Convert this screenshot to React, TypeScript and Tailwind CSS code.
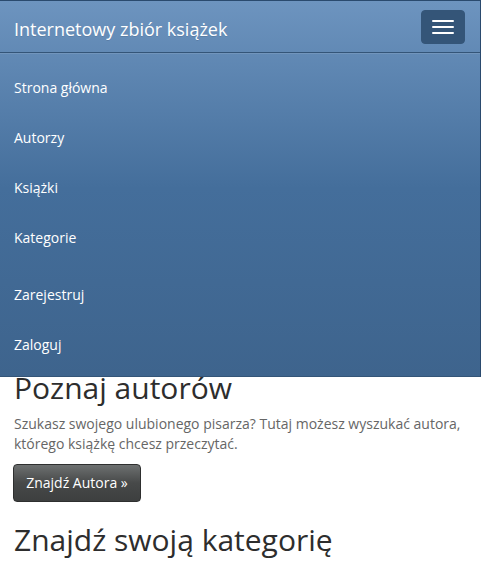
import React from "react";

const links1 = ["Strona główna", "Autorzy", "Książki", "Kategorie"];
const links2 = ["Zarejestruj", "Zaloguj"];

export default function App() {
  return (
    <div className="relative min-h-[562px] bg-white" style={{ fontFamily: '"Open Sans", "Liberation Sans", sans-serif' }}>
      <nav className="absolute left-0 right-0 top-0 z-10 border border-l-0 border-[#2a4a6e] border-b-[#345578] bg-[linear-gradient(#6d94bf,#446e9b_50%,#3e648d)]">
        <div className="flex h-[51px] items-start justify-between">
          <span className="pl-[14px] pt-[18px] text-[18px] leading-[20px] text-white [text-shadow:0_1px_0_rgba(0,0,0,0.1)]">
            Internetowy zbiór książek
          </span>
          <button className="mr-[15px] mt-[9px] flex h-[34px] w-[44px] flex-col items-center justify-center gap-[4px] rounded-[4px] border border-[#345578] bg-[#345578]">
            <span className="block h-[2px] w-[22px] rounded-[1px] bg-white" />
            <span className="block h-[2px] w-[22px] rounded-[1px] bg-white" />
            <span className="block h-[2px] w-[22px] rounded-[1px] bg-white" />
          </button>
        </div>
        <div className="flex flex-col gap-[7.5px] border-t border-[#345578] py-[7.5px] shadow-[inset_0_1px_0_rgba(255,255,255,0.1)]">
          <ul>
            {links1.map((l) => (
              <li key={l} className="flex h-[50px] items-center px-[14px] pt-[4px] text-[14px] leading-[20px] text-white">
                {l}
              </li>
            ))}
          </ul>
          <ul>
            {links2.map((l) => (
              <li key={l} className="flex h-[50px] items-center px-[14px] pt-[4px] text-[14px] leading-[20px] text-white">
                {l}
              </li>
            ))}
          </ul>
        </div>
      </nav>

      <div className="px-[14px] pt-[371px]">
        <h2 className="mb-[10px] text-[30px] font-normal leading-[33px] text-[#2d2d2d]">Poznaj autorów</h2>
        <p className="mb-[10px] text-[14px] leading-[20px] text-[#666666]">
          Szukasz swojego ulubionego pisarza? Tutaj możesz wyszukać autora, którego książkę chcesz przeczytać.
        </p>
        <button className="ml-[-1px] flex h-[38px] w-[128px] items-center justify-center rounded-[4px] border border-[#2e2f2f] bg-[linear-gradient(#6d7070,#474949_50%,#3d3f3f)] text-[14px] leading-[20px] text-white">
          Znajdź Autora »
        </button>
        <h2 className="mt-[21px] text-[30px] font-normal leading-[33px] text-[#2d2d2d]">Znajdź swoją kategorię</h2>
      </div>
    </div>
  );
}
